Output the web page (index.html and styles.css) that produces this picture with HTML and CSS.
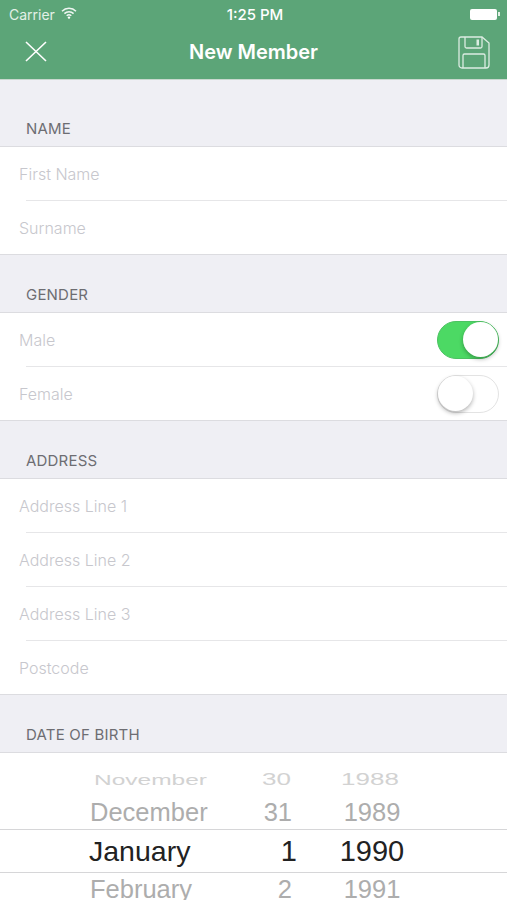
FILE: index.html
```html
<!DOCTYPE html>
<html lang="en">
  <head>
    <meta charset="UTF-8" />
    <meta name="viewport" content="width=device-width, initial-scale=1" />
    <title>New Member</title>
    <link rel="stylesheet" href="styles.css">
  </head>
  <body>
    <header class="top-bar">
      <div class="status-bar">
        <div class="status-left">
          <span>Carrier</span>
          <svg class="wifi" width="16" height="12" viewBox="0 0 16 12">
            <path d="M1 4.200a10 10 0 0 1 14 0M3.400 6.600a6.600 6.600 0 0 1 9.200 0M5.700 8.800a3.300 3.300 0 0 1 4.600 0" fill="none" stroke="#fff" stroke-width="1.500" opacity="0.9" />
            <circle cx="8" cy="10.600" r="1.200" fill="#fff" />
          </svg>
        </div>
        <span class="status-time">1:25 PM</span>
        <div class="status-right">
          <span class="battery"></span>
          <span class="battery-tip"></span>
        </div>
      </div>
      <div class="nav-bar">
        <svg class="nav-icon" width="24" height="24" viewBox="0 0 24 24">
          <path d="M2 2L22 21M22 2L2 21" fill="none" stroke="#fff" stroke-width="1.600" />
        </svg>
        <h1>New Member</h1>
        <svg class="nav-icon save-icon" width="32" height="33" viewBox="0 0 32 33">
          <path d="M3 1H24L31 7V29A3 3 0 0 1 28 32H4A3 3 0 0 1 1 29V3A2 2 0 0 1 3 1Z" fill="none" stroke="#dcece2" stroke-width="1.300" />
          <path d="M7 1V10.500A1.500 1.500 0 0 0 8.500 12H22.500A1.500 1.500 0 0 0 24 10.500V1M5 32V19.500A1.500 1.500 0 0 1 6.500 18H25.500A1.500 1.500 0 0 1 27 19.500V32" fill="none" stroke="#dcece2" stroke-width="1.300" />
          <rect x="18.500" y="3.500" width="2.500" height="6" fill="#dcece2" />
        </svg>
      </div>
    </header>

    <h2 class="section-title first">NAME</h2>
    <div class="group">
      <div class="row"><span class="placeholder">First Name</span></div>
      <div class="row"><span class="placeholder">Surname</span></div>
    </div>

    <h2 class="section-title">GENDER</h2>
    <div class="group">
      <div class="row">
        <span class="placeholder">Male</span>
        <span class="switch on"><span class="knob"></span></span>
      </div>
      <div class="row">
        <span class="placeholder">Female</span>
        <span class="switch"><span class="knob"></span></span>
      </div>
    </div>

    <h2 class="section-title">ADDRESS</h2>
    <div class="group">
      <div class="row"><span class="placeholder">Address Line 1</span></div>
      <div class="row"><span class="placeholder">Address Line 2</span></div>
      <div class="row"><span class="placeholder">Address Line 3</span></div>
      <div class="row"><span class="placeholder">Postcode</span></div>
    </div>

    <h2 class="section-title">DATE OF BIRTH</h2>
    <div class="picker">
      <div class="picker-row far">
        <span class="month">November</span><span class="day">30</span><span class="year">1988</span>
      </div>
      <div class="picker-row near">
        <span class="month">December</span><span class="day">31</span><span class="year">1989</span>
      </div>
      <div class="picker-row selected">
        <span class="month">January</span><span class="day">1</span><span class="year">1990</span>
      </div>
      <div class="picker-row near">
        <span class="month">February</span><span class="day">2</span><span class="year">1991</span>
      </div>
    </div>
  </body>
</html>
```

FILE: styles.css
```css
html {
  overflow: hidden;
}
body {
  font-family: "Inter", "Liberation Sans", sans-serif;
  background-color: #efeff4;
  margin: 0;
  height: 900px;
  overflow: hidden;
}
.top-bar {
  background-color: #5ca578;
  height: 79px;
  color: #fff;
  border-bottom: 1px solid #c9d8cf;
}
.status-bar {
  display: flex;
  justify-content: space-between;
  align-items: center;
  height: 28px;
  padding: 0 7px 0 9px;
  font-size: 14px;
  position: relative;
}
.status-left {
  display: flex;
  align-items: center;
  gap: 6px;
  color: #e3f0e7;
}
.wifi {
  margin-top: -3px;
}
.status-time {
  font-size: 15px;
  font-weight: 500;
  position: absolute;
  left: 3px;
  right: 0;
  text-align: center;
}
.status-right {
  display: flex;
  align-items: center;
}
.battery {
  width: 27px;
  height: 11px;
  background-color: #fff;
  border-radius: 2px;
}
.battery-tip {
  width: 2px;
  height: 4px;
  margin-left: 1px;
  background-color: #e3f0e7;
}
.nav-bar {
  display: flex;
  justify-content: space-between;
  align-items: center;
  height: 48px;
  padding: 0 7px 0 24px;
}
.nav-bar h1 {
  font-size: 20px;
  font-weight: 600;
  margin: 0;
  position: absolute;
  left: 0;
  right: 0;
  text-align: center;
}
.nav-icon {
  display: block;
}
.save-icon {
  margin-right: 10px;
}
.section-title {
  font-size: 15px;
  font-weight: 400;
  letter-spacing: 0.2px;
  color: #6d6d72;
  margin: 0;
  height: 57px;
  padding: 0 0 8px 26px;
  box-sizing: border-box;
  display: flex;
  align-items: flex-end;
}
.section-title.first {
  height: 66px;
}
.group {
  background-color: #fff;
  border-top: 1px solid #dcdce0;
  border-bottom: 1px solid #dcdce0;
}
.row {
  height: 53px;
  display: flex;
  align-items: center;
  justify-content: space-between;
  padding-left: 19px;
  padding-right: 8px;
  position: relative;
}
.row + .row::before {
  content: "";
  position: absolute;
  top: -1px;
  left: 26px;
  right: 0;
  height: 1px;
  background-color: #e6e6e8;
}
.row + .row {
  margin-top: 1px;
}
.placeholder {
  font-size: 16px;
  font-weight: 300;
  color: #c7c7cd;
}
.switch {
  display: flex;
  width: 62px;
  height: 38px;
  border-radius: 19px;
  border: 1.500px solid #e3e3e3;
  box-sizing: border-box;
  background-color: #fff;
  position: relative;
}
.switch.on {
  background-color: #4cd964;
  border-color: #4cc262;
  justify-content: flex-end;
}
.knob {
  width: 35px;
  height: 35px;
  border-radius: 50%;
  background-color: #fff;
  box-shadow: 0 2px 4px rgba(0, 0, 0, 0.3);
}
.picker {
  background-color: #fff;
  border-top: 1px solid #dcdce0;
  height: 148px;
  padding-top: 11px;
  box-sizing: border-box;
  overflow: hidden;
  font-family: "Liberation Sans", Arial, sans-serif;
}
.picker-row {
  display: grid;
  grid-template-columns: 190px 107px 150px;
  align-items: center;
  color: #adadad;
  white-space: nowrap;
}
.month {
  padding-left: 90px;
}
.day {
  justify-self: end;
}
.year {
  justify-self: center;
}
.picker-row.far {
  height: 32px;
  font-size: 24.5px;
  color: #d2d2d2;
  transform: scaleY(0.6);
}
.picker-row.far .month {
  padding-left: 94px;
}
.picker-row.far .day {
  font-size: 26px;
  padding-right: 6px;
}
.picker-row.far .year {
  font-size: 26px;
  padding-right: 4px;
}
.picker-row.near {
  height: 33px;
  font-size: 25.5px;
}
.picker-row.near .day {
  padding-right: 5px;
}
.picker-row.selected {
  height: 42px;
  font-size: 29px;
  color: #222;
  border-top: 1px solid #d6d6d8;
  border-bottom: 1px solid #d6d6d8;
}
.picker-row.selected .month {
  font-size: 28.5px;
  padding-left: 89px;
}
```
